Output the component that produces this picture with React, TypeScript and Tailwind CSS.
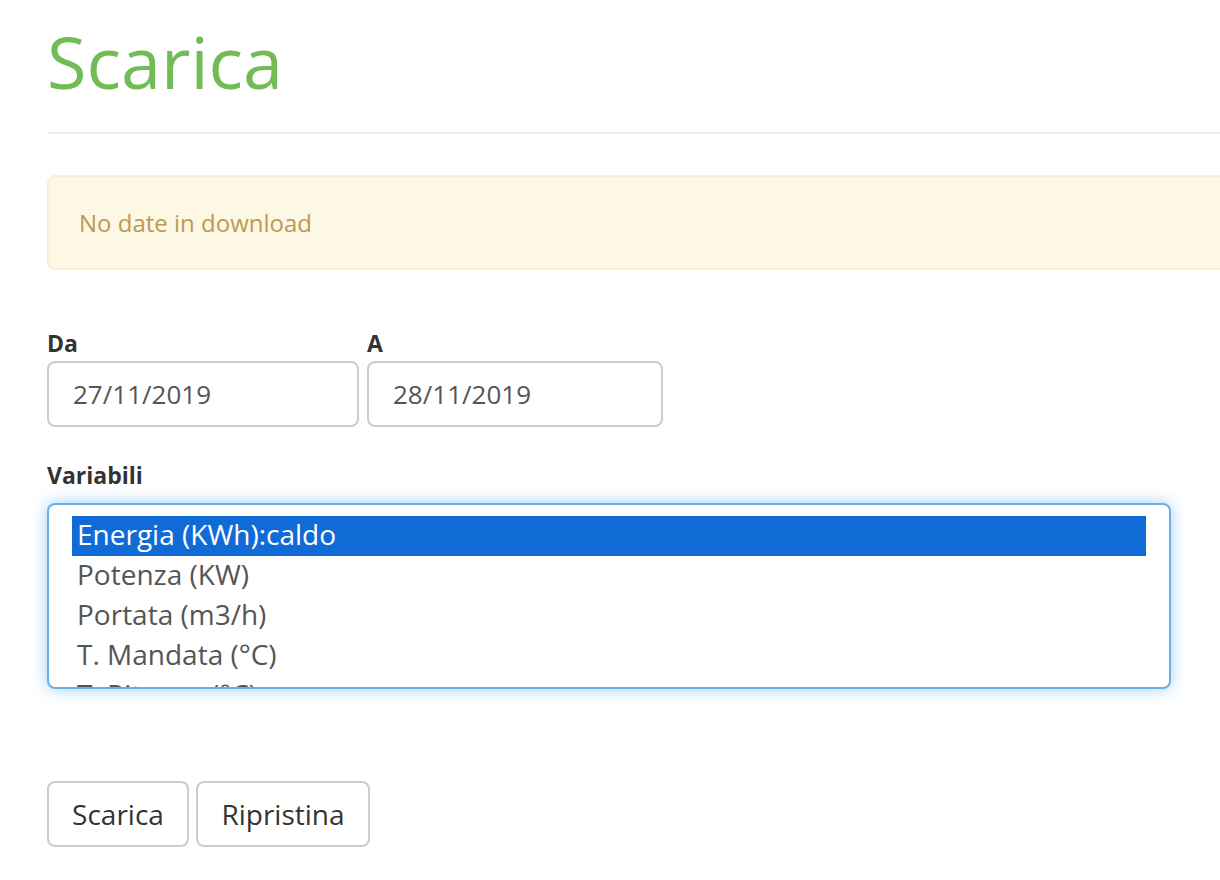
import React from "react";

const options = [
  "Energia (KWh):caldo",
  "Potenza (KW)",
  "Portata (m3/h)",
  "T. Mandata (°C)",
  "T. Ritorno (°C)",
];

const App = () => {
  return (
    <div
      className="w-[1220px] h-[880px] overflow-hidden bg-white text-[#333]"
      style={{ fontFamily: '"Open Sans", "Noto Sans", sans-serif' }}
    >
      <div className="ml-[47px] w-[1240px]">
        {/* Header */}
        <h1 className="pt-[21px] text-[72px] leading-[80px] font-normal text-[#72bc56]">Scarica</h1>
        <div className="mt-[31px] border-t-2 border-[#eeeeee]" />

        {/* Alert */}
        <div className="mt-[41px] flex h-[95px] items-center rounded-[8px] border-2 border-[#fbeed5] bg-[#fcf8e3] px-[30px] text-[24px] leading-[36px] text-[#c09853]">
          No date in download
        </div>

        {/* Date range */}
        <div className="mt-[56px] flex gap-[8px]">
          <div className="flex flex-col">
            <label className="text-[23px] font-bold leading-[34px] text-[#333]">Da</label>
            <div className="mt-[1px] flex h-[66px] w-[312px] items-center rounded-[8px] border-2 border-[#cccccc] px-[24px] text-[26px] text-[#555]">
              27/11/2019
            </div>
          </div>
          <div className="flex flex-col">
            <label className="text-[23px] font-bold leading-[34px] text-[#333]">A</label>
            <div className="mt-[1px] flex h-[66px] w-[296px] items-center rounded-[8px] border-2 border-[#cccccc] px-[24px] text-[26px] text-[#555]">
              28/11/2019
            </div>
          </div>
        </div>

        {/* Variables */}
        <label className="mt-[31px] block text-[23px] font-bold leading-[34px] text-[#333]">Variabili</label>
        <div className="mt-[11px] h-[186px] w-[1124px] overflow-hidden rounded-[8px] border-2 border-[#66afe9] bg-white px-[23px] pt-[11px] shadow-[0_0_16px_rgba(102,175,233,0.6)]">
          {options.map((o, i) => (
            <div
              key={o}
              className={
                i === 0
                  ? "h-[40px] bg-[#106bd6] px-[5px] text-[28px] leading-[36px] text-white"
                  : "h-[40px] px-[5px] text-[28px] leading-[36px] text-[#555]"
              }
            >
              {o}
            </div>
          ))}
        </div>

        {/* Actions */}
        <div className="mt-[92px] flex gap-[7px]">
          <button className="h-[66px] w-[142px] rounded-[8px] border-2 border-[#cccccc] bg-white text-[28px] text-[#333]">
            Scarica
          </button>
          <button className="h-[66px] w-[174px] rounded-[8px] border-2 border-[#cccccc] bg-white text-[28px] text-[#333]">
            Ripristina
          </button>
        </div>
      </div>
    </div>
  );
};

export default App;
